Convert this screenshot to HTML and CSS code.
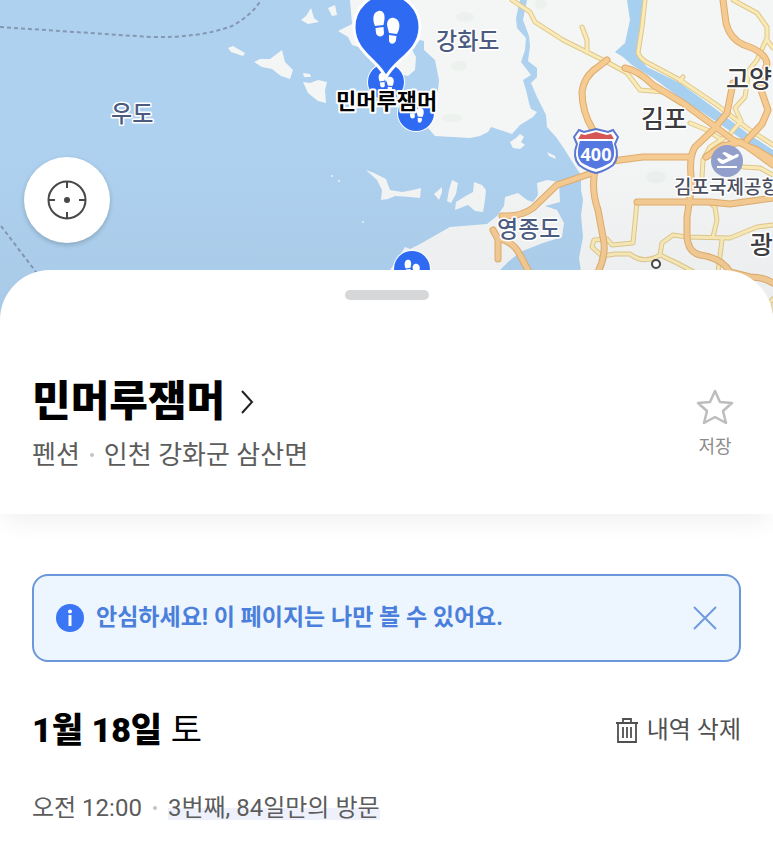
FILE: index.html
```html
<!DOCTYPE html>
<html lang="ko">
<head>
  <meta charset="UTF-8">
  <meta name="viewport" content="width=device-width, initial-scale=1.0">
  <title>민머루잼머</title>
  <link rel="stylesheet" href="styles.css">
</head>
<body>
  <div class="map">
    <svg class="map-canvas" viewBox="0 0 773 320" preserveAspectRatio="xMidYMin slice" role="img" aria-label="지도">
      <defs>
        <linearGradient id="shade" x1="0" y1="0" x2="0" y2="1">
          <stop offset="0.45" stop-color="#456" stop-opacity="0"/>
          <stop offset="0.85" stop-color="#456" stop-opacity="0.04"/>
        </linearGradient>
        <g id="feet">
          <path d="M-7.500 -16C-3 -17 -1 -13 -1.500 -8L-2.500 -2L-11 -1C-14 -8 -13 -15 -7.500 -16Z"/>
          <path d="M-10.500 1L-2.500 0L-2 6C-2 10 -9 11 -10 6Z"/>
          <path d="M8 -9C3 -10 0 -5 1.500 0L3 6L11 7C15 0 14 -8 8 -9Z"/>
          <path d="M3 8L10.500 9L10 13C9 18 3 18 3 13Z"/>
        </g>
        <g id="spot">
          <circle r="19" fill="#fff"/>
          <circle r="18" fill="#2f6bf2"/>
          <use href="#feet" transform="scale(.58)" fill="#fff"/>
        </g>
        <g id="orange">
          <path d="M607 60L598 67Q584 76 582 92Q582 112 593 130"/>
          <path d="M595 170Q591 190 598 210L603 237Q607 254 598 272"/>
          <path d="M595 172L557 185L533 208Q521 217 502 216"/>
          <path d="M612 161L643 157L690 157"/>
          <path d="M625 68Q638 70 653 85L683 103L713 125L733 140L757 150L773 160"/>
          <path d="M723 0L726 23Q730 39 744 45Q766 52 767 64L760 87L768 110L762 124L747 140"/>
          <path d="M733 83L727 113L713 130L695 147Q688 158 692 185L687 217V237Q688 252 700 255Q722 258 730 272L750 277Q764 277 773 283"/>
          <path d="M637 202H710L730 204L773 198"/>
          <path d="M493 230L498 239V259"/>
          <path d="M498 238Q514 242 520 255L529 272"/>
          <path d="M773 165L741 142L722 146L706 157"/>
        </g>
        <g id="yellow">
          <path d="M512 0L530 12L535 22L563 40L587 52L607 62L627 73L640 90L663 92L680 103"/>
          <path d="M582 27L587 40V52"/>
          <path d="M645 0L642 27L638 53Q641 60 650 64L680 80L717 105L747 128L773 145"/>
          <path d="M680 81L683 77"/>
          <path d="M733 0L757 13L767 27V40L773 48M767 38L757 60L749 70L745 97L735 108L741 121L730 134L710 147L703 160L702 177"/>
          <path d="M690 123L707 130L722 140"/>
          <path d="M637 202L633 243L612 245L607 239L594 240L592 247L602 256L615 254L630 254Q644 265 660 255L662 243L673 235L687 237L730 238L757 227L773 225"/>
          <path d="M660 255L677 263L694 272"/>
          <path d="M710 203L715 207L717 220L713 237"/>
          <path d="M722 240L718 272"/>
          <path d="M743 167L760 168L773 175"/>
          <path d="M773 299L770 302V312"/>
        </g>
      </defs>

      <rect width="773" height="320" fill="#aed1ef"/>

      <!-- land -->
      <g fill="#f4f5f5">
        <path d="M350 0L352 24L338 31L348 37L352 45L362 48L376 60L382 72L398 74L408 76L415 70L416 57L411 48L420 40L424 41L424 50L435 60L439 80L438 90L434 98L428 128L435 136L470 138L480 136L488 132L491 127L512 134L520 125L533 117L537 112L531 109L529 103L526 90L523 80L531 75L521 62L525 50L526 38L517 28L516 18L520 0Z"/>
        <path d="M527 0L523 20L529 36L530 46L528 61L537 68V77L531 83L537 97L546 115L547 127L556 137L563 147L573 163L581 175V190L583 200L581 215L583 237L579 258L581 272L591 320H773V0Z"/>
        <path d="M390 270L400 255L405 247L410 249L420 244L450 227L487 224L497 216L504 206L505 197L518 193L527 200L533 202L538 195L537 183L547 180L559 182L560 202L545 206L557 210L564 223L562 237L543 243L520 252L508 262L498 272L495 290H390Z"/>
        <path d="M228 48L233 46L245 53L243 56L231 52Z"/>
        <path d="M254 62L260 59L270 59L282 50L285 62L293 70L290 79L281 76L272 69L262 67Z"/>
        <path d="M303 73L310 74L311 77L304 77Z"/>
        <path d="M303 82L310 83L318 80L327 82L325 90L326 103L318 101L308 93Z"/>
        <path d="M301 20L306 16L311 8L314 18L319 22L308 24Z"/>
        <path d="M328 8L335 5L337 15L332 16Z"/>
        <path d="M366 170L374 173L386 179L390 190L402 192L413 190L421 188L420 198L410 197L395 196L388 199L381 200L382 190L377 180Z"/>
        <path d="M442 187L442 192L439 200L434 194Z"/>
        <path d="M452 180L458 183L456 194L451 203L447 201L449 190Z"/>
        <path d="M474 182L482 185L486 190L485 200L483 212L475 211L468 205L455 210L456 202L464 197L473 192Z"/>
        <path d="M510 142L516 138L520 134L524 137L521 142L525 145L520 149L513 148Z"/>
        <path d="M547 152L555 156L556 159L549 156Z"/>
        <circle cx="332" cy="176" r="1"/>
        <circle cx="339" cy="181" r="1"/>
        <circle cx="363" cy="222" r="1"/>
      </g>

      <!-- hills -->
      <g fill="#dcebdc" opacity=".3">
        <ellipse cx="465" cy="17" rx="9" ry="5"/>
        <ellipse cx="459" cy="66" rx="8" ry="5"/>
        <ellipse cx="452" cy="118" rx="10" ry="4"/>
        <ellipse cx="541" cy="4" rx="6" ry="5"/>
        <ellipse cx="656" cy="177" rx="10" ry="6"/>
      </g>

      <!-- river -->
      <path fill="#a6cff0" d="M627 0L630 20L625 43L615 52L623 57L632 65L653 78L683 100L717 122L740 138L773 162V150L747 133L717 110L680 83L647 67L637 55L640 27L643 0Z"/>

      <g fill="none" stroke-linejoin="round" stroke-linecap="round">
        <use href="#yellow" stroke="#dfc88a" stroke-width="5"/>
        <use href="#yellow" stroke="#faeab8" stroke-width="3"/>
        <use href="#orange" stroke="#dfac6c" stroke-width="7"/>
        <use href="#orange" stroke="#f5cb92" stroke-width="5"/>
        <path stroke="#8497b3" stroke-width="2" stroke-linecap="butt" stroke-dasharray="4 3" d="M0 27L150 37Q200 38 232 26Q252 15 261 0M1 226L36 272"/>
      </g>
      <rect width="773" height="320" fill="url(#shade)"/>

      <!-- route 400 shield -->
      <g transform="translate(596 150)">
        <path fill="#fff" stroke="#5b78cf" stroke-width="2" d="M-17 -20L-12 -18L0 -21L12 -18L17 -20L22 -13L19 -6Q24 7 17 15Q9 21 0 23Q-9 21 -17 15Q-24 7 -19 -6L-22 -13Z"/>
        <path fill="#d65555" d="M-18 -11L-15 -16L-11 -15L0 -18L11 -15L15 -16L18 -11Z"/>
        <path fill="#5478df" d="M-16 -9H16Q21 7 14 13Q7 17 0 19Q-7 17 -14 13Q-21 7 -16 -9Z"/>
        <text class="route-number" y="11" text-anchor="middle">400</text>
      </g>

      <!-- airport -->
      <g transform="translate(727 161)">
        <circle r="16" fill="#929fcb"/>
        <path fill="#fff" d="M-10 -2L-8 -3L-4 -1L1 -3L-5 -8L-2 -9L6 -5L10 -7Q13 -7 11 -4L-4 3Q-7 3 -10 -2Z"/>
        <path fill="#fff" d="M-10 5H10V7H-10Z"/>
      </g>
      <circle cx="656" cy="264" r="4" fill="#fff" stroke="#444" stroke-width="2"/>

      <g class="place sea">
        <text x="111" y="122">우도</text>
        <text x="436" y="49">강화도</text>
        <text x="497" y="237">영종도</text>
      </g>
      <g class="place city">
        <text x="641" y="128">김포</text>
        <text x="726" y="88">고양</text>
        <text x="750" y="254">광</text>
      </g>
      <text class="place small" x="674" y="194">김포국제공항</text>

      <use href="#spot" x="386" y="82"/>
      <use href="#spot" x="416" y="113"/>
      <use href="#spot" x="412" y="269"/>
      <path fill="#2f6bf2" stroke="#fff" stroke-width="3" d="M386 78C380 61 354 53 354 27A33 33 0 0 1 420 27C420 53 392 61 386 78Z"/>
      <use href="#feet" transform="translate(386 27)" fill="#fff"/>
      <text class="place current" x="336" y="109">민머루잼머</text>
    </svg>

    <button class="locate" aria-label="현재 위치">
      <svg width="40" height="40" viewBox="0 0 40 40" fill="none" stroke="#484848" stroke-width="2">
        <circle cx="20" cy="20" r="18.500"/>
        <path d="M20 2V8M20 32V38M2 20H8M32 20H38"/>
        <circle cx="20" cy="20" r="3" fill="#484848" stroke="none"/>
      </svg>
    </button>
  </div>

  <main class="sheet">
    <header class="place-header">
      <div class="handle"></div>
      <div class="place-row">
        <div>
          <h1>
            <a href="#">민머루잼머
              <svg width="13" height="24" viewBox="0 0 13 24" fill="none" stroke="#222" stroke-width="2"><path d="M1 1L11 12L1 23"/></svg>
            </a>
          </h1>
          <p class="meta address">펜션<span class="dot"></span>인천 강화군 삼산면</p>
        </div>
        <button class="save">
          <svg width="38" height="36" viewBox="0 0 38 36" fill="none" stroke="#bdbdbd" stroke-width="2.500" stroke-linejoin="round"><path d="M19 2L24 13L36 14L27 22L30 34L19 28L8 34L11 22L2 14L14 13Z"/></svg>
          저장
        </button>
      </div>
    </header>

    <section class="visit">
      <div class="notice">
        <svg width="28" height="28" viewBox="0 0 28 28"><circle cx="14" cy="14" r="14" fill="#3b76f5"/><path fill="#fff" d="M12.500 11H15.500V22H12.500Z"/><circle cx="14" cy="7.500" r="2" fill="#fff"/></svg>
        <p>안심하세요! 이 페이지는 나만 볼 수 있어요.</p>
        <button aria-label="닫기">
          <svg width="24" height="24" viewBox="0 0 24 24" fill="none" stroke="#6f9ae0" stroke-width="2"><path d="M1 1L23 23M23 1L1 23"/></svg>
        </button>
      </div>

      <div class="visit-row">
        <h2>1월 18일 <span>토</span></h2>
        <button class="delete">
          <svg width="24" height="26" viewBox="0 0 24 26" fill="none" stroke="#505050" stroke-width="1.800"><path d="M1 6H23M8 6V2H16V6M3 6V25H21V6M8 10V21M12 10V21M16 10V21"/></svg>
          내역 삭제
        </button>
      </div>

      <p class="meta">오전 12:00<span class="dot"></span><span class="count">3번째, 84일만의 방문</span></p>
    </section>
  </main>
</body>
</html>
```

FILE: styles.css
```css
* {
  box-sizing: border-box;
}

body {
  margin: 0;
  background-color: #fff;
  font-family: Roboto, 'Noto Sans CJK KR', sans-serif;
  color: #000;
}

h1, h2, p {
  margin: 0;
}

button {
  border: none;
  padding: 0;
  background: none;
  font: inherit;
  cursor: pointer;
}

svg {
  display: block;
  flex-shrink: 0;
}

/* map */
.map {
  position: relative;
  height: 320px;
  overflow: hidden;
}

.map-canvas {
  width: 100%;
  height: 100%;
}

.place {
  font-weight: 500;
  paint-order: stroke;
  stroke: #fff;
  stroke-width: 3px;
  stroke-linejoin: round;
}

.sea {
  font-size: 23px;
  fill: #4c5c80;
}

.city {
  font-size: 25px;
  fill: #3c3c40;
}

.small {
  font-size: 19px;
  fill: #4a4e5e;
}

.current {
  font-size: 22px;
  font-weight: 700;
  fill: #000;
  stroke-width: 4px;
}

.route-number {
  font-family: 'Noto Sans', sans-serif;
  font-size: 18px;
  font-weight: 700;
  fill: #fff;
}

.locate {
  position: absolute;
  left: 24px;
  top: 157px;
  width: 86px;
  height: 86px;
  display: flex;
  align-items: center;
  justify-content: center;
  background-color: #fff;
  border-radius: 50%;
  box-shadow: 0 2px 5px rgba(0, 0, 0, 0.2);
}

/* bottom sheet */
.sheet {
  position: relative;
  margin-top: -50px;
  background-color: #fff;
  border-radius: 50px 50px 0 0;
}

.place-header {
  padding: 20px 32px 36px;
  border-radius: 50px 50px 0 0;
  box-shadow: 0 12px 24px -4px rgba(0, 0, 0, 0.06);
  clip-path: inset(0 0 -40px 0);
}

.handle {
  width: 84px;
  height: 10px;
  margin: 0 auto 72px;
  border-radius: 5px;
  background-color: #d6d7d9;
}

.place-row {
  display: flex;
  justify-content: space-between;
  align-items: center;
}

h1 {
  font-size: 42px;
  line-height: 60px;
  font-weight: 900;
}

h1 a {
  display: flex;
  align-items: center;
  gap: 16px;
  color: inherit;
  text-decoration: none;
}

.meta {
  display: flex;
  align-items: center;
  font-size: 24px;
  line-height: 36px;
  color: #5c5c5c;
}

.address {
  font-size: 26px;
  line-height: 46px;
}

.dot {
  width: 4px;
  height: 4px;
  margin: 0 11px;
  border-radius: 50%;
  background-color: #c4c4c4;
}

.address .dot {
  margin: 0 10px;
}

.save {
  display: flex;
  flex-direction: column;
  align-items: center;
  gap: 8px;
  width: 52px;
  font-size: 18px;
  line-height: 28px;
  color: #8c8c8c;
}

.visit {
  padding: 60px 32px 20px;
}

.notice {
  display: flex;
  align-items: center;
  gap: 12px;
  height: 88px;
  padding: 0 22px;
  border: 2px solid #6c97da;
  border-radius: 16px;
  background-color: #edf5fe;
  color: #4a7fdc;
  font-size: 23px;
  line-height: 32px;
  font-weight: 700;
}

.notice p {
  flex: 1;
}

.visit-row {
  display: flex;
  justify-content: space-between;
  align-items: center;
  margin: 44px 0 36px;
}

h2 {
  font-size: 34px;
  line-height: 48px;
  font-weight: 900;
}

h2 span {
  font-weight: 400;
}

.delete {
  display: flex;
  align-items: center;
  gap: 8px;
  font-size: 24px;
  line-height: 32px;
  color: #505050;
}

.count {
  background: linear-gradient(transparent 50%, #eef1fc 50%, #eef1fc 84%, transparent 84%);
}
```
